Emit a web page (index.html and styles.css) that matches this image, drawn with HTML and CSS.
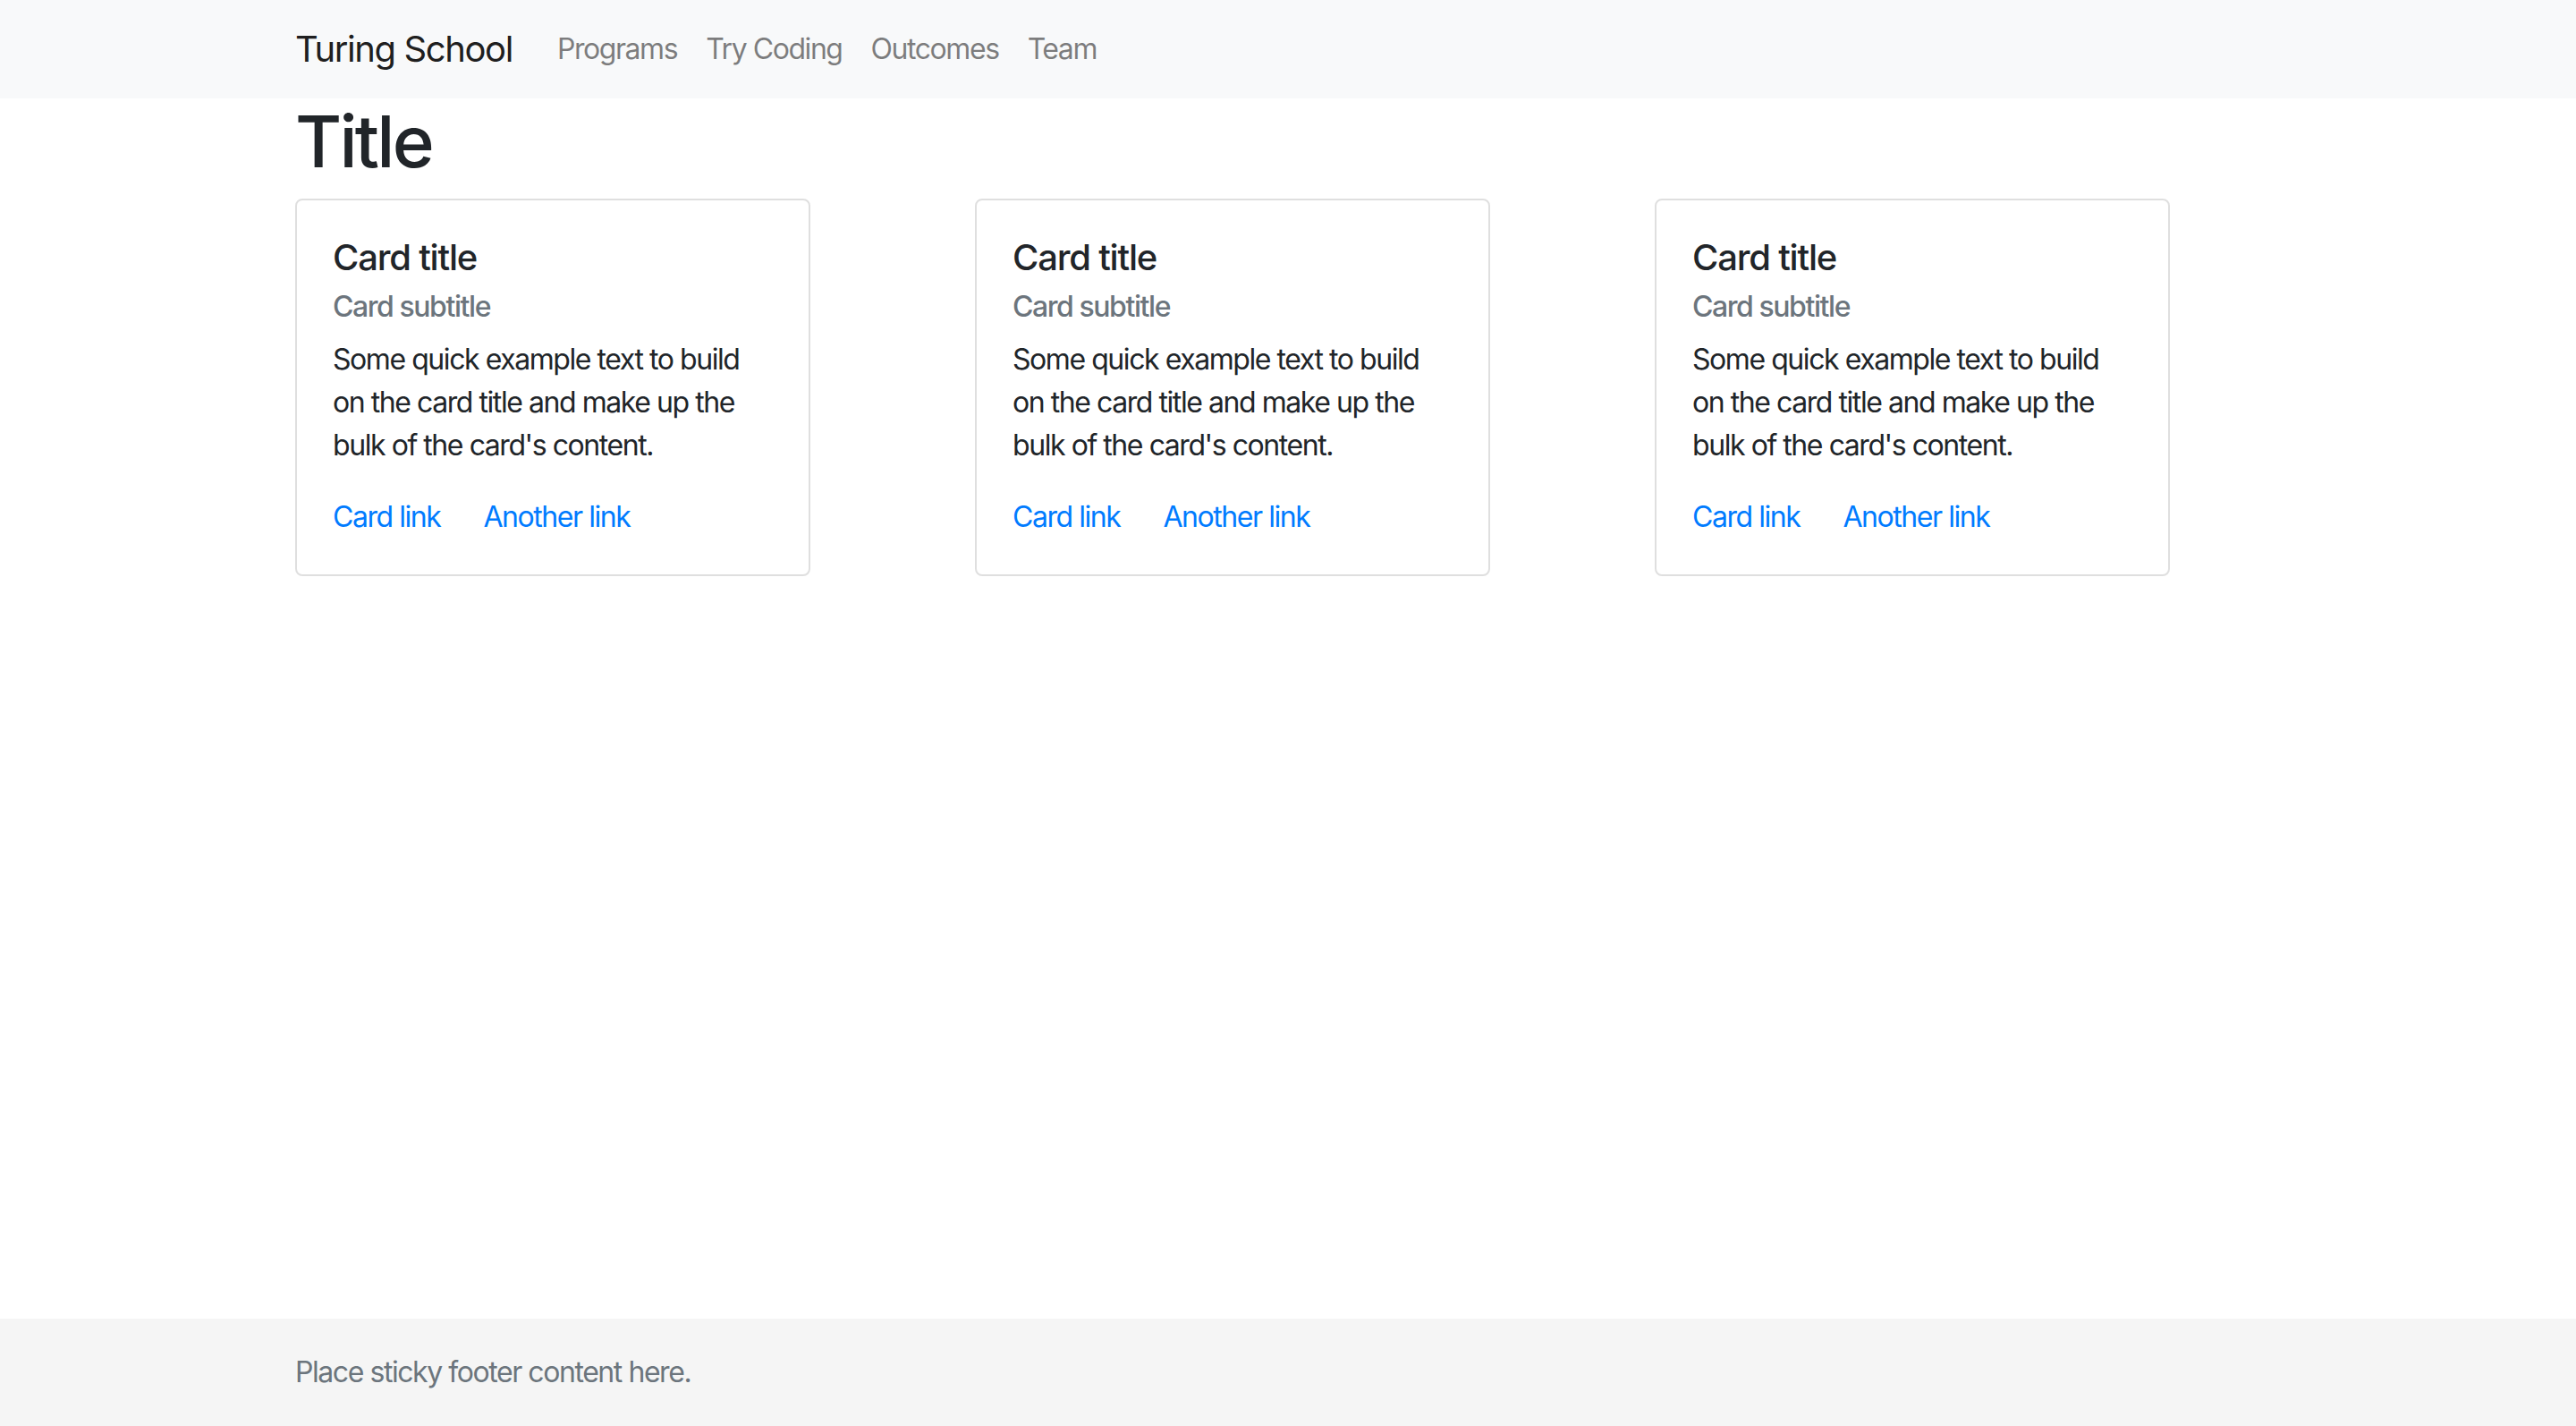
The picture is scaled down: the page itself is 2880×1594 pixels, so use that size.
FILE: index.html
```html
<!DOCTYPE html>
<html lang="en">
<head>
<meta charset="utf-8">
<title>Turing School</title>
<link rel="stylesheet" href="styles.css">
</head>
<body>
<nav class="navbar">
  <div class="container nav-inner">
    <a class="brand" href="#">Turing School</a>
    <ul class="nav-links">
      <li><a href="#">Programs</a></li>
      <li><a href="#">Try Coding</a></li>
      <li><a href="#">Outcomes</a></li>
      <li><a href="#">Team</a></li>
    </ul>
  </div>
</nav>
<main class="main">
  <div class="container">
    <h1 class="page-title">Title</h1>
    <div class="row">
      <div class="col">
        <div class="card">
          <h5 class="card-title">Card title</h5>
          <h6 class="card-subtitle">Card subtitle</h6>
          <p class="card-text">Some quick example text to build on the card title and make up the bulk of the card's content.</p>
          <div class="card-links"><a href="#">Card link</a><a href="#">Another link</a></div>
        </div>
      </div>
      <div class="col">
        <div class="card">
          <h5 class="card-title">Card title</h5>
          <h6 class="card-subtitle">Card subtitle</h6>
          <p class="card-text">Some quick example text to build on the card title and make up the bulk of the card's content.</p>
          <div class="card-links"><a href="#">Card link</a><a href="#">Another link</a></div>
        </div>
      </div>
      <div class="col">
        <div class="card">
          <h5 class="card-title">Card title</h5>
          <h6 class="card-subtitle">Card subtitle</h6>
          <p class="card-text">Some quick example text to build on the card title and make up the bulk of the card's content.</p>
          <div class="card-links"><a href="#">Card link</a><a href="#">Another link</a></div>
        </div>
      </div>
    </div>
  </div>
</main>
<footer class="footer">
  <div class="container">
    <span class="footer-text">Place sticky footer content here.</span>
  </div>
</footer>
</body>
</html>
```
FILE: styles.css
```css
* { box-sizing: border-box; }
html, body { height: 100%; }
body {
  margin: 0;
  font-family: Inter, "Noto Sans", "Liberation Sans", sans-serif;
  font-size: 32px;
  line-height: 48px;
  letter-spacing: -0.045em;
  color: #212529;
  background: #fff;
  display: flex;
  flex-direction: column;
  min-height: 100vh;
}
.container {
  width: 2280px;
  margin: 0 auto;
  padding: 0 30px;
}
.navbar {
  background: #f8f9fa;
  height: 110px;
  flex-shrink: 0;
}
.nav-inner {
  display: flex;
  align-items: center;
  height: 110px;
}
.brand {
  font-size: 40px;
  line-height: 60px;
  letter-spacing: -0.035em;
  color: rgba(0,0,0,.9);
  text-decoration: none;
  margin-right: 34px;
}
.nav-links {
  display: flex;
  list-style: none;
  margin: 0;
  padding: 0;
}
.nav-links a {
  display: block;
  padding: 16px;
  line-height: 48px;
  color: rgba(0,0,0,.5);
  text-decoration: none;
}
.main { flex: 1 0 auto; }
.page-title {
  margin: 0 0 16px;
  font-size: 80px;
  font-weight: 500;
  line-height: 96px;
  letter-spacing: -0.035em;
}
.row {
  display: flex;
  margin: 0 -30px;
}
.col {
  width: 760px;
  padding: 0 30px;
}
.card {
  width: 576px;
  border: 2px solid rgba(0,0,0,.125);
  border-radius: 8px;
  padding: 40px;
}
.card-title {
  margin: 0 0 24px;
  font-size: 40px;
  font-weight: 500;
  line-height: 48px;
  letter-spacing: -0.03em;
}
.card-subtitle {
  margin: -12px 0 16px;
  font-size: 32px;
  font-weight: 500;
  line-height: 38.4px;
  color: #6c757d;
}
.card-text {
  margin: 0 0 32px;
}
.card-links a {
  color: #007bff;
  text-decoration: none;
}
.card-links a + a { margin-left: 48px; }
.footer {
  background: #f5f5f5;
  height: 120px;
  flex-shrink: 0;
}
.footer-text {
  display: block;
  line-height: 120px;
  color: #6c757d;
}
```
